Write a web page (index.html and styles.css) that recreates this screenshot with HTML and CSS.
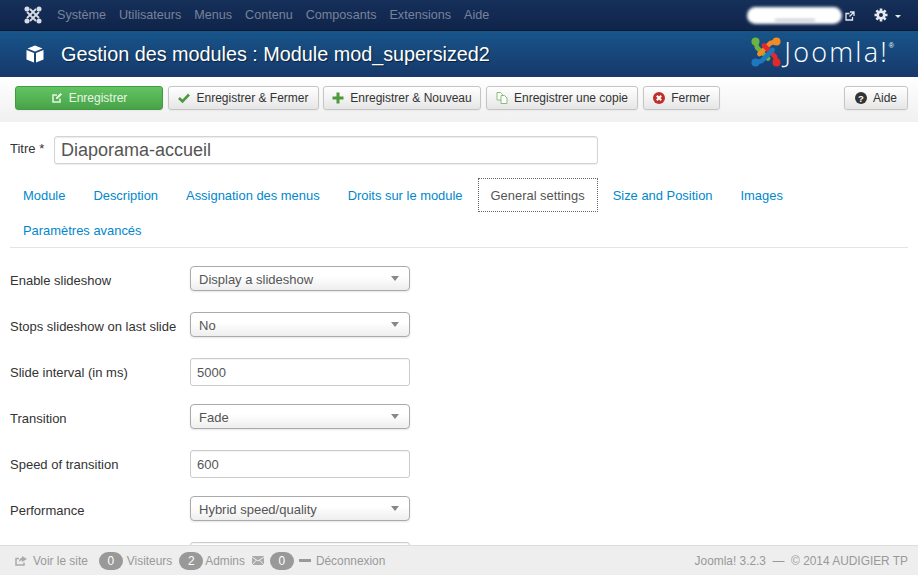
FILE: index.html
```html
<!DOCTYPE html>
<html lang="fr">
<head>
<meta charset="utf-8">
<title>Gestion des modules</title>
<link rel="stylesheet" href="styles.css">
</head>
<body>
<nav class="topbar">
  <svg class="top-logo" viewBox="0 0 30 30"><g fill="none" stroke="#d8dde5" stroke-width="3"><path d="M5 10l15 15M10 5l15 15M25 10L10 25M20 5L5 20"/></g><g fill="#d8dde5"><circle cx="5" cy="5" r="4.200"/><circle cx="25" cy="5" r="4.200"/><circle cx="25" cy="25" r="4.200"/><circle cx="5" cy="25" r="4.200"/></g></svg>
  <ul class="menu">
    <li>Système</li><li>Utilisateurs</li><li>Menus</li><li>Contenu</li><li>Composants</li><li>Extensions</li><li>Aide</li>
  </ul>
  <span class="blob"></span>
  <svg class="ext" viewBox="0 0 10 10"><path d="M7.500 6v3H1V2.500h3.500M5 1h4v4M9 1L4.500 5.500" fill="none" stroke="#e4e8ee" stroke-width="1.300"/></svg>
  <svg class="gear" viewBox="0 0 14 14"><circle cx="7" cy="7" r="3.300" fill="none" stroke="#e6e9ee" stroke-width="2.600"/><path d="M7 .500v13M.500 7h13M2.400 2.400l9.200 9.200M11.600 2.400l-9.200 9.200" stroke="#e6e9ee" stroke-width="2.600" stroke-dasharray="2.600 7.800"/></svg>
  <span class="caret-light"></span>
</nav>
<header class="head">
  <svg class="cube" viewBox="0 0 18 18"><path d="M9 .5l7.500 3-7.500 3-7.500-3z" fill="#fff"/><path d="M.500 5l7.500 3v9.500l-7.500-3z" fill="#fff"/><path d="M17.500 5L10 8v9.500l7.500-3z" fill="#fff"/></svg>
  <h1 class="head-title">Gestion des modules : Module mod_supersized2</h1>
  <div class="brand">
    <svg class="brand-mark" viewBox="0 0 30 30"><g fill="none" stroke-width="4.600" stroke-linecap="round" stroke-linejoin="round"><path d="M4.500 4.500L6 10.500l11 11" stroke="#6cb33f"/><path d="M25.500 4.500L19.500 6 8.500 17" stroke="#f38b24"/><path d="M25.500 25.500L24 19.500l-11-11" stroke="#e3292b"/><path d="M4.500 25.500L10.500 24l11-11" stroke="#1f78bf"/></g><circle cx="4.500" cy="4.500" r="4" fill="#6cb33f"/><circle cx="25.500" cy="4.500" r="4" fill="#f38b24"/><circle cx="25.500" cy="25.500" r="4" fill="#e3292b"/><circle cx="4.500" cy="25.500" r="4" fill="#1f78bf"/></svg>
    <span class="brand-name">Joomla!</span><sup class="reg">®</sup>
  </div>
</header>
<div class="toolbar">
  <button class="btn btn-save"><svg class="ico" viewBox="0 0 12 12"><path d="M9 6.500V10H2V3h4" fill="none" stroke="#e8f5e6" stroke-width="1.500"/><path d="M5 5.500L9.500 1 11 2.500 6.500 7H5z" fill="#e8f5e6"/></svg>Enregistrer</button>
  <button class="btn w-close"><svg class="ico" viewBox="0 0 12 12"><path d="M1 6l3.500 3.500 6.500-7" fill="none" stroke="#4d9a3d" stroke-width="2.600"/></svg>Enregistrer &amp; Fermer</button>
  <button class="btn w-new"><svg class="ico" viewBox="0 0 12 12"><path d="M6 .500v11M.500 6h11" stroke="#4d9a3d" stroke-width="3"/></svg>Enregistrer &amp; Nouveau</button>
  <button class="btn w-copy"><svg class="ico" viewBox="0 0 12 12"><path d="M1 .500h3.500L6.500 2.500V8H1z" fill="#fff" stroke="#86bd78"/><path d="M5 3.500h3.500L11 6v5.500H5z" fill="#fff" stroke="#86bd78"/></svg>Enregistrer une copie</button>
  <button class="btn w-shut"><svg class="ico" viewBox="0 0 12 12"><circle cx="6" cy="6" r="6" fill="#c0302b"/><path d="M3.800 3.800l4.400 4.400M8.200 3.800l-4.400 4.400" stroke="#fff" stroke-width="2"/></svg>Fermer</button>
  <button class="btn btn-help"><svg class="ico" viewBox="0 0 12 12"><circle cx="6" cy="6" r="6" fill="#333"/><text class="qmark" x="6" y="9.500" text-anchor="middle">?</text></svg>Aide</button>
</div>
<main class="content">
  <div class="title-row">
    <label class="title-label">Titre *</label>
    <input class="title-input" value="Diaporama-accueil">
  </div>
  <ul class="tabs">
    <li class="tab">Module</li>
    <li class="tab">Description</li>
    <li class="tab">Assignation des menus</li>
    <li class="tab">Droits sur le module</li>
    <li class="tab tab-active">General settings</li>
    <li class="tab">Size and Position</li>
    <li class="tab">Images</li>
    <li class="tab">Paramètres avancés</li>
  </ul>
  <section class="fields">
    <div class="field"><span class="field-label">Enable slideshow</span><div class="select">Display a slideshow</div></div>
    <div class="field"><span class="field-label">Stops slideshow on last slide</span><div class="select">No</div></div>
    <div class="field"><span class="field-label">Slide interval (in ms)</span><div class="text-field">5000</div></div>
    <div class="field"><span class="field-label">Transition</span><div class="select">Fade</div></div>
    <div class="field"><span class="field-label">Speed of transition</span><div class="text-field">600</div></div>
    <div class="field"><span class="field-label">Performance</span><div class="select">Hybrid speed/quality</div></div>
    <div class="field"><span class="field-label"></span><div class="text-field"></div></div>
  </section>
</main>
<footer class="status">
  <svg class="foot-ico" viewBox="0 0 12 10"><path d="M9 6.500V9H1V2.500h3" fill="none" stroke="#aaa" stroke-width="1.500"/><path d="M7 0l5 3-5 3V4.500C5.500 4.500 4.500 5 4 6.500 4 3.500 5 2 7 1.800z" fill="#aaa"/></svg>
  <span class="foot-link">Voir le site</span>
  <span class="badge b-visit">0</span><span class="foot-link">Visiteurs</span>
  <span class="badge b-admin">2</span><span class="foot-link">Admins</span>
  <svg class="foot-mail" viewBox="0 0 12 9"><rect width="12" height="9" fill="#aaa"/><path d="M0 1l6 4 6-4M0 9l4.500-5M12 9L7.500 4" fill="none" stroke="#eee"/></svg>
  <span class="badge b-mail">0</span>
  <span class="foot-dash"></span>
  <span class="foot-link">Déconnexion</span>
  <span class="foot-right">Joomla! 3.2.3 &nbsp;— &nbsp;© 2014 AUDIGIER TP</span>
</footer>
</body>
</html>
```
FILE: styles.css
```css
* { box-sizing: border-box; }
html, body { height: 100%; margin: 0; }
body {
  display: flex;
  flex-direction: column;
  overflow: hidden;
  font: 13px/18px "Liberation Sans", Arial, sans-serif;
  color: #333;
  background: #fff;
}
.topbar {
  flex: none;
  height: 31px;
  display: flex;
  align-items: center;
  padding: 0 0 0 24px;
  background: linear-gradient(#15305a, #10244a);
  border-bottom: 1px solid #0a1a33;
}
.top-logo { width: 18px; height: 18px; margin: 0 15px 1px 0; flex: none; }
.menu { display: flex; gap: 13px; list-style: none; margin: 0; padding: 0; color: #77839a; flex: 1; font-size: 12.600px; }
.blob {
  width: 95px;
  height: 17px;
  margin-right: 3px;
  border-radius: 9px;
  background: linear-gradient(#b9c0cc, #b9c0cc) 50% 12px / 40px 2px no-repeat #fff;
  filter: blur(1.500px);
}
.ext { width: 10px; height: 10px; margin-right: 19px; margin-top: 1px; }
.gear { width: 14px; height: 14px; }
.caret-light { width: 0; height: 0; border: 3.500px solid transparent; border-top-color: #e6e9ee; border-bottom: 0; margin: 2px 17px 0 7px; }
.head {
  flex: none;
  height: 46px;
  display: flex;
  align-items: center;
  padding: 0 0 0 26px;
  background: linear-gradient(#17558a, #17386a);
  color: #fff;
}
.cube { width: 18px; height: 18px; flex: none; margin-right: 17px; }
.head-title { flex: 1; margin: 0; font-size: 19.800px; line-height: 24px; font-weight: 400; text-shadow: 1px 1px 1px rgba(0,0,0,.5); }
.brand { display: flex; align-items: flex-start; margin: 0 24px 5px 0; }
.brand-mark { width: 30px; height: 30px; flex: none; }
.brand-name { font: 300 27px/30px "Open Sans", sans-serif; margin-left: 3px; letter-spacing: 2.200px; }
.reg { font-size: 7px; line-height: 8px; margin: 5px 0 0 0; }
.toolbar {
  flex: none;
  height: 45px;
  display: flex;
  align-items: flex-start;
  padding: 9px 10px 0 15px;
  gap: 5px;
  background: linear-gradient(#fff, #f0f0f0);
}
.btn {
  height: 24px;
  display: flex;
  align-items: center;
  justify-content: center;
  gap: 6px;
  padding: 0;
  font: inherit;
  font-size: 12px;
  color: #333;
  background: linear-gradient(#fff, #e6e6e6);
  border: 1px solid #c5c5c5;
  border-radius: 3px;
  box-shadow: 0 1px 2px rgba(0,0,0,.05);
}
.ico { width: 12px; height: 12px; flex: none; }
.qmark { font: bold 9.500px "Liberation Sans", sans-serif; fill: #fff; }
.btn-save { width: 148px; color: #e8f5e6; background: linear-gradient(#62c462, #48a348); border-color: #439a43; }
.w-close { width: 151px; }
.w-new { width: 158px; margin-left: -1px; }
.w-copy { width: 152px; }
.w-shut { width: 77px; }
.btn-help { width: 64px; margin-left: auto; }
.content { flex: 1; min-height: 0; overflow: hidden; padding: 14px 10px 0; }
.title-row { display: flex; align-items: center; }
.title-label { width: 44px; margin-bottom: 2px; }
.title-input {
  width: 544px;
  height: 28px;
  padding: 0 6px;
  font: 18px "Liberation Sans", Arial, sans-serif;
  color: #555;
  border: 1px solid #d4d4d4;
  border-radius: 3px;
  box-shadow: inset 0 1px 1px rgba(0,0,0,.08), 0 1px 0 #eee;
}
.tabs {
  display: flex;
  flex-wrap: wrap;
  row-gap: 1px;
  list-style: none;
  margin: 14px 0 0;
  padding: 0;
  font-size: 12.930px;
  border-bottom: 1px solid #e4e4e4;
  color: #08c;
}
.tab { height: 34px; padding: 8px 12px 0; margin: 0 2px 0 0; border: 1px solid transparent; }
.tab-active { color: #555; border: 1px dotted #666; }
.fields { padding-top: 18px; }
.field { display: flex; height: 46px; align-items: flex-start; }
.field-label { width: 180px; padding-top: 6px; }
.select, .text-field {
  width: 220px;
  color: #555;
  background: #fff;
  border: 1px solid #ccc;
  border-radius: 4px;
}
.select {
  height: 25px;
  padding: 4px 8px 0;
  position: relative;
  background: linear-gradient(#fff 40%, #eee);
  border-color: #aaa;
  box-shadow: 0 1px 2px rgba(0,0,0,.1);
}
.select::after {
  content: "";
  position: absolute;
  right: 10px;
  top: 9px;
  border: 4px solid transparent;
  border-top: 5px solid #888;
  border-bottom: 0;
}
.text-field { height: 28px; padding: 5px 6px 0; border-radius: 3px; box-shadow: inset 0 1px 1px rgba(0,0,0,.05); }
.status {
  flex: none;
  height: 30px;
  display: flex;
  align-items: center;
  padding: 0 10px 0 15px;
  font-size: 11.900px;
  color: #999;
  background: #eee;
  border-top: 1px solid #ddd;
}
.foot-ico { width: 12px; height: 10px; margin-right: 6px; }
.badge { width: 24px; height: 18px; margin-right: 4px; line-height: 18px; text-align: center; color: #fff; background: #999; border-radius: 9px; }
.b-visit { margin-left: 11px; }
.b-admin { margin-left: 7px; margin-right: 2px; }
.b-mail { margin-left: 6px; margin-right: 5px; }
.foot-mail { width: 12px; height: 9px; margin-left: 7px; }
.foot-dash { width: 12px; height: 2.500px; margin-right: 5px; background: #999; }
.foot-right { margin-left: auto; }
```
